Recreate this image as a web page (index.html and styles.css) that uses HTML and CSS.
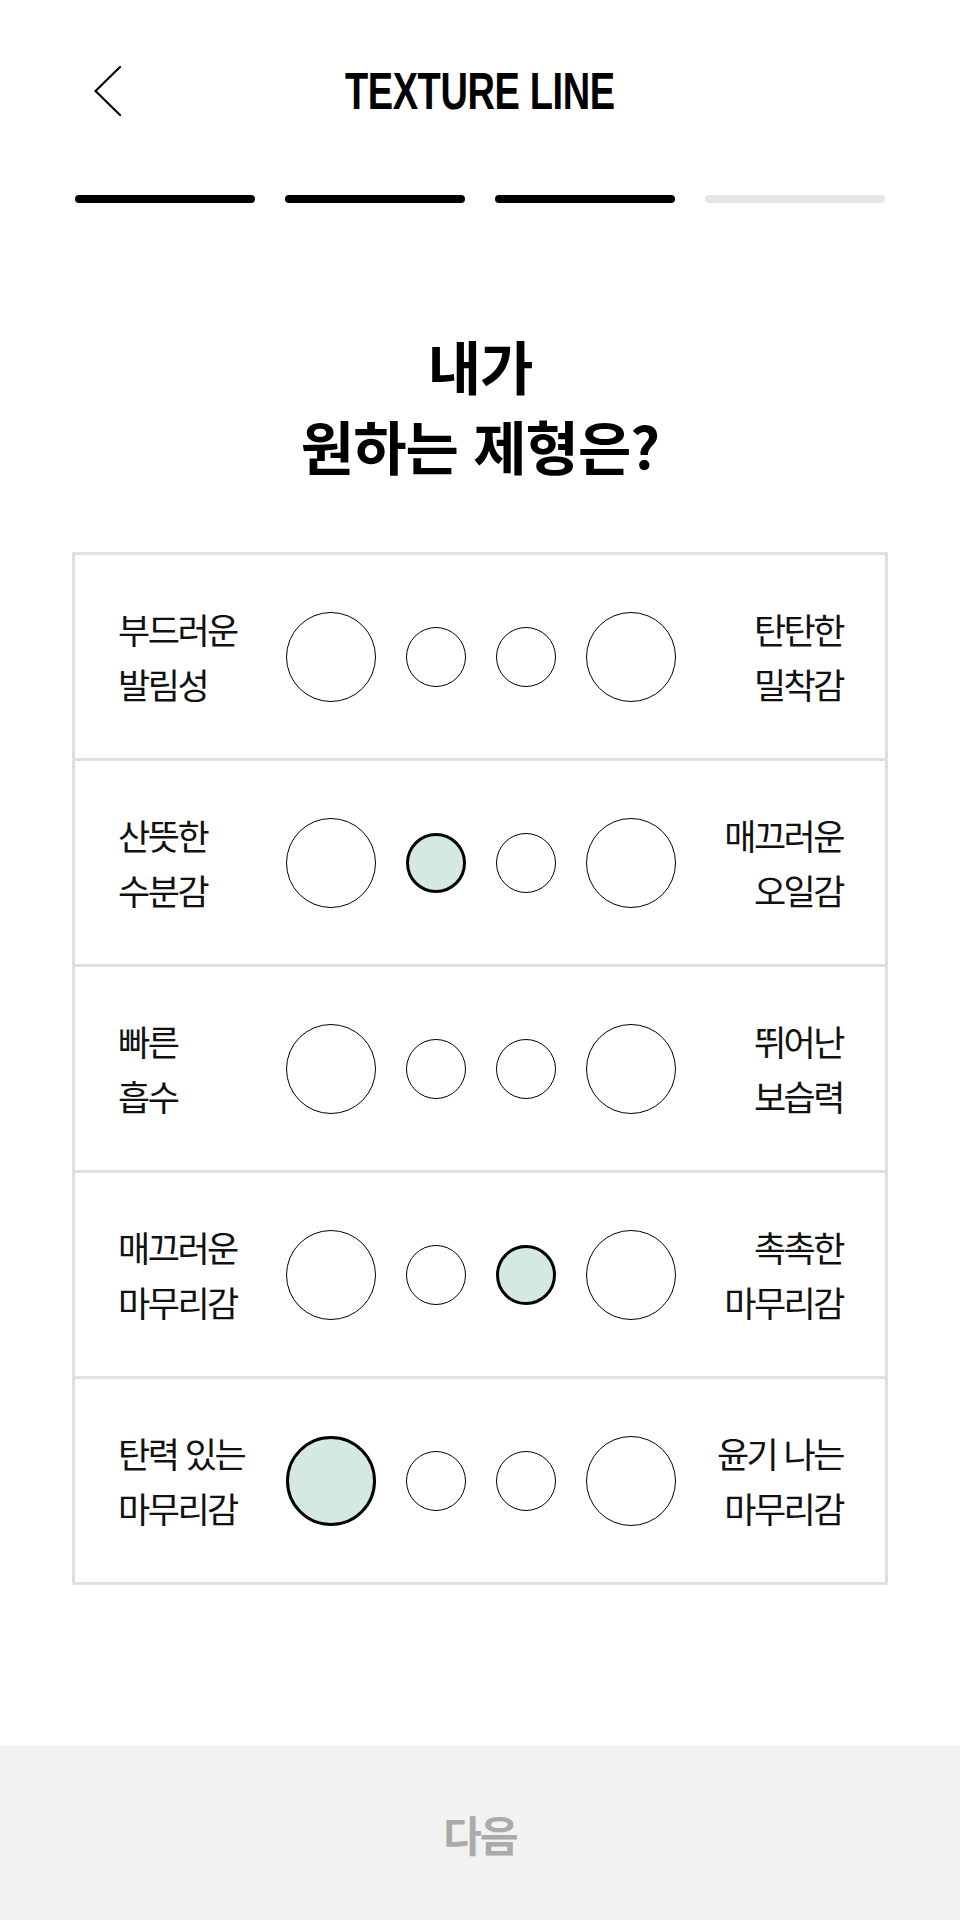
FILE: index.html
```html
<!DOCTYPE html>
<html lang="ko">
<head>
<meta charset="utf-8">
<title>TEXTURE LINE</title>
<link rel="stylesheet" href="styles.css">
</head>
<body>
<div class="page">
  <header class="topbar">
    <div class="back">
      <svg class="back-icon" width="28" height="50" viewBox="0 0 28 50" aria-hidden="true">
        <polyline points="26,1 1.5,25 26,49" fill="none" stroke="#000" stroke-width="2.2" stroke-linejoin="miter" stroke-linecap="round"/>
      </svg>
    </div>
    <h1 class="title"><span class="title-text">TEXTURE LINE</span></h1>
    <div class="spacer"></div>
  </header>

  <div class="progress">
    <span class="step done"></span>
    <span class="step done"></span>
    <span class="step done"></span>
    <span class="step"></span>
  </div>

  <h2 class="question"><span class="q-line">내가</span><span class="q-line">원하는 제형은?</span></h2>

  <div class="scale-table">
    <div class="scale-row">
      <div class="label left">부드러운<br>발림성</div>
      <div class="dots">
        <span class="dot big"></span>
        <span class="dot small"></span>
        <span class="dot small"></span>
        <span class="dot big"></span>
      </div>
      <div class="label right">탄탄한<br>밀착감</div>
    </div>
    <div class="scale-row">
      <div class="label left">산뜻한<br>수분감</div>
      <div class="dots">
        <span class="dot big"></span>
        <span class="dot small selected"></span>
        <span class="dot small"></span>
        <span class="dot big"></span>
      </div>
      <div class="label right">매끄러운<br>오일감</div>
    </div>
    <div class="scale-row">
      <div class="label left">빠른<br>흡수</div>
      <div class="dots">
        <span class="dot big"></span>
        <span class="dot small"></span>
        <span class="dot small"></span>
        <span class="dot big"></span>
      </div>
      <div class="label right">뛰어난<br>보습력</div>
    </div>
    <div class="scale-row">
      <div class="label left">매끄러운<br>마무리감</div>
      <div class="dots">
        <span class="dot big"></span>
        <span class="dot small"></span>
        <span class="dot small selected"></span>
        <span class="dot big"></span>
      </div>
      <div class="label right">촉촉한<br>마무리감</div>
    </div>
    <div class="scale-row">
      <div class="label left">탄력 있는<br>마무리감</div>
      <div class="dots">
        <span class="dot big selected"></span>
        <span class="dot small"></span>
        <span class="dot small"></span>
        <span class="dot big"></span>
      </div>
      <div class="label right">윤기 나는<br>마무리감</div>
    </div>
  </div>

  <footer class="next-bar">
    <span class="next-label">다음</span>
  </footer>
</div>
</body>
</html>
```

FILE: styles.css
```css
* {
  box-sizing: border-box;
}

html, body {
  margin: 0;
  padding: 0;
  background: #fff;
}

body {
  font-family: "Noto Sans CJK KR", "Noto Sans", sans-serif;
  color: #111;
}

.page {
  min-height: 1920px;
  display: flex;
  flex-direction: column;
}

/* Header */
.topbar {
  height: 181px;
  display: grid;
  grid-template-columns: minmax(0, 1fr) auto minmax(0, 1fr);
  align-items: center;
}

.back {
  padding-left: 94px;
  display: flex;
  align-items: center;
}

.back-icon {
  display: block;
}

.title {
  margin: 0;
  font-family: "Liberation Sans", Arial, sans-serif;
  font-weight: 700;
  font-size: 52px;
  line-height: 60px;
  color: #000;
  text-align: center;
}

.title-text {
  display: inline-block;
  transform: scaleX(0.73);
  letter-spacing: -0.5px;
  white-space: nowrap;
}

/* Progress */
.progress {
  margin: 14px 75px 0;
  display: flex;
  gap: 30px;
}

.step {
  flex: 1;
  height: 8px;
  border-radius: 4px;
  background: #e5e5e5;
}

.step.done {
  background: #000;
}

/* Question */
.question {
  margin: 122px 0 0;
  font-size: 58px;
  font-weight: 700;
  line-height: 80px;
  letter-spacing: -1px;
  text-align: center;
  color: #000;
}

.q-line {
  display: block;
}

/* Scale table */
.scale-table {
  margin: 67px 72px 0;
  border: 3px solid #e0e0e0;
}

.scale-row {
  height: 206px;
  display: grid;
  grid-template-columns: minmax(0, 1fr) auto minmax(0, 1fr);
  align-items: center;
  padding: 0 42px 0 43px;
  border-top: 3px solid #e0e0e0;
}

.scale-row:first-child {
  height: 203px;
  border-top: none;
}

.label {
  font-size: 35px;
  line-height: 55px;
  letter-spacing: -2.5px;
  color: #111;
  white-space: nowrap;
  padding-bottom: 2px;
}

.label.left {
  text-align: left;
}

.label.right {
  text-align: right;
}

.dots {
  display: flex;
  align-items: center;
  gap: 30px;
}

.dot {
  display: block;
  border-radius: 50%;
  border: 1.6px solid #000;
  background: #fff;
}

.dot.big {
  width: 90px;
  height: 90px;
}

.dot.small {
  width: 60px;
  height: 60px;
}

.dot.selected {
  border-width: 3px;
  background: #d3e9e1;
}

/* Footer button */
.next-bar {
  margin-top: auto;
  height: 174px;
  background: #f2f2f2;
  display: flex;
  align-items: center;
  justify-content: center;
}

.next-label {
  font-size: 42px;
  font-weight: 700;
  letter-spacing: -2px;
  color: #aaaaaa;
}
```
